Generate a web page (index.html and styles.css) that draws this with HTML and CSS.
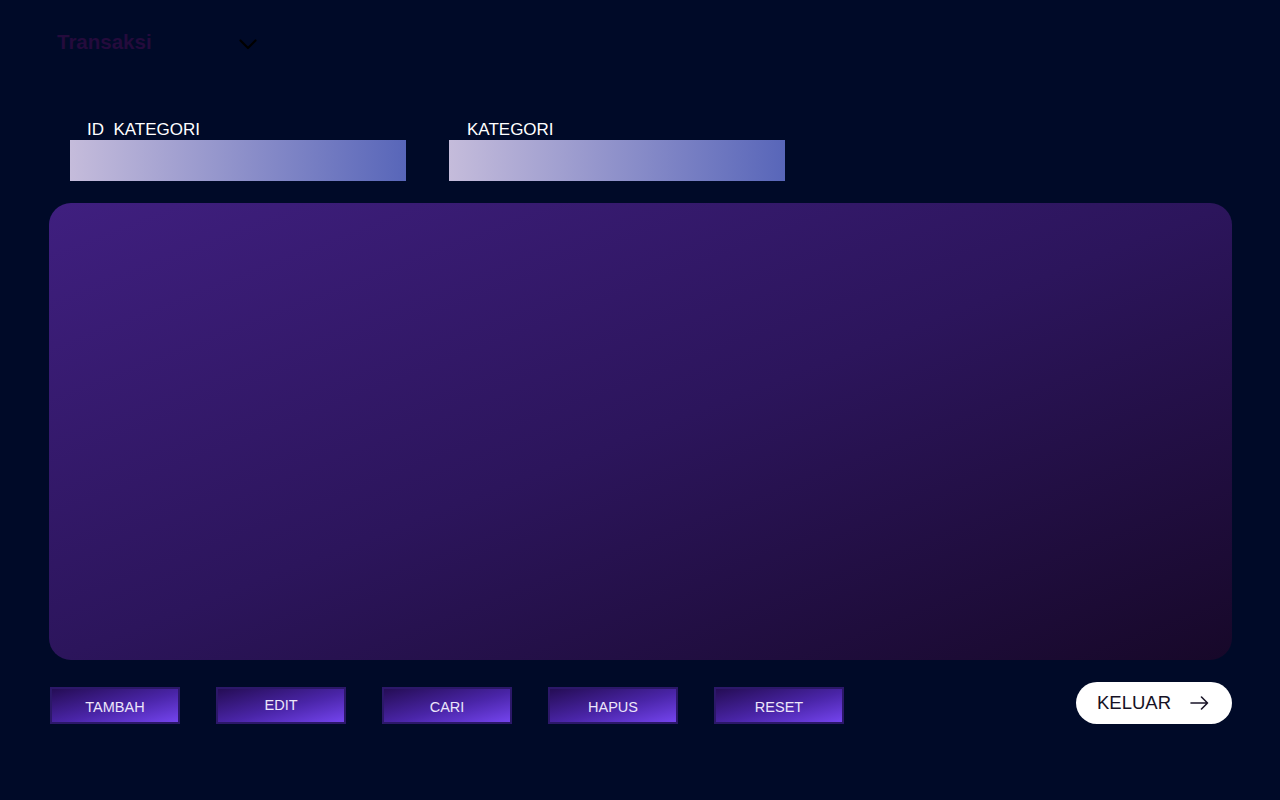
FILE: index.html
```html
<!DOCTYPE html>
<html lang="id">
<head>
<meta charset="utf-8">
<title>Kategori</title>
<link rel="stylesheet" href="styles.css">
</head>
<body>
<div class="page">
  <header class="header">
    <span class="title">Transaksi</span>
    <svg class="chevron" width="18" height="11" viewBox="0 0 18 11"><path d="M1.5 1.5 L9 9 L16.5 1.5" fill="none" stroke="#000" stroke-width="2.2" stroke-linecap="round" stroke-linejoin="round"/></svg>
  </header>

  <section class="fields">
    <div class="field field-id">
      <label class="label">ID&nbsp; KATEGORI</label>
      <div class="input"></div>
    </div>
    <div class="field field-kat">
      <label class="label">KATEGORI</label>
      <div class="input"></div>
    </div>
  </section>

  <main class="panel"></main>

  <footer class="actions">
    <div class="buttons">
      <button class="btn">TAMBAH</button>
      <button class="btn btn-edit">EDIT</button>
      <button class="btn">CARI</button>
      <button class="btn">HAPUS</button>
      <button class="btn">RESET</button>
    </div>
    <button class="logout">KELUAR
      <svg class="arrow" width="19" height="14" viewBox="0 0 19 14"><path d="M1 7 H17.5 M11.5 1 L17.5 7 L11.5 13" fill="none" stroke="#1a1528" stroke-width="1.6" stroke-linecap="round" stroke-linejoin="round"/></svg>
    </button>
  </footer>
</div>
</body>
</html>
```

FILE: styles.css
```css
html, body {
  margin: 0;
  padding: 0;
  background: #000a28;
  height: 100%;
}
body {
  font-family: "Liberation Sans", Arial, sans-serif;
}
.page {
  width: 1280px;
  height: 800px;
  box-sizing: border-box;
  padding: 22px 48px 0 49px;
  display: flex;
  flex-direction: column;
}
.header {
  height: 40px;
  display: flex;
  align-items: center;
  padding-left: 8px;
}
.title {
  font-size: 20.5px;
  line-height: 40px;
  font-weight: bold;
  color: #240b3c;
  width: 182px;
}
.chevron {
  margin-top: 5px;
}
.fields {
  margin-top: 58px;
  display: flex;
  gap: 43px;
  padding-left: 21px;
}
.field {
  display: flex;
  flex-direction: column;
  width: 336px;
}
.label {
  font-size: 17px;
  line-height: 20px;
  color: #ffffff;
  padding-left: 17px;
}
.field-kat .label {
  padding-left: 18px;
}
.input {
  height: 41px;
  background: linear-gradient(to right, #c5bcdb, #5866b9);
}
.panel {
  margin-top: 22px;
  height: 457px;
  border-radius: 22px;
  background: linear-gradient(to bottom right, #3f1f7f 0%, #2c155c 50%, #170829 100%);
}
.actions {
  margin-top: 22px;
  display: flex;
  align-items: flex-end;
  justify-content: space-between;
}
.buttons {
  display: flex;
  gap: 36px;
  padding-left: 1px;
}
.btn {
  width: 130px;
  height: 37px;
  box-sizing: border-box;
  border: 2px solid #2c1869;
  background: linear-gradient(to bottom right, #250d55 0%, #4a25a8 55%, #7444ee 100%);
  color: #ece6fa;
  font-family: "Liberation Sans", Arial, sans-serif;
  font-size: 14.5px;
  line-height: 20px;
  padding: 2px 0 0 0;
  text-align: center;
}
.btn-edit {
  padding: 0 0 2px 0;
}
.logout {
  width: 156px;
  height: 42px;
  box-sizing: border-box;
  border: none;
  border-radius: 21px;
  background: #ffffff;
  color: #161226;
  font-family: "Liberation Sans", Arial, sans-serif;
  font-size: 18.5px;
  display: flex;
  align-items: center;
  justify-content: space-between;
  padding: 0 23px 0 21px;
}
.arrow {
  display: block;
}
```
